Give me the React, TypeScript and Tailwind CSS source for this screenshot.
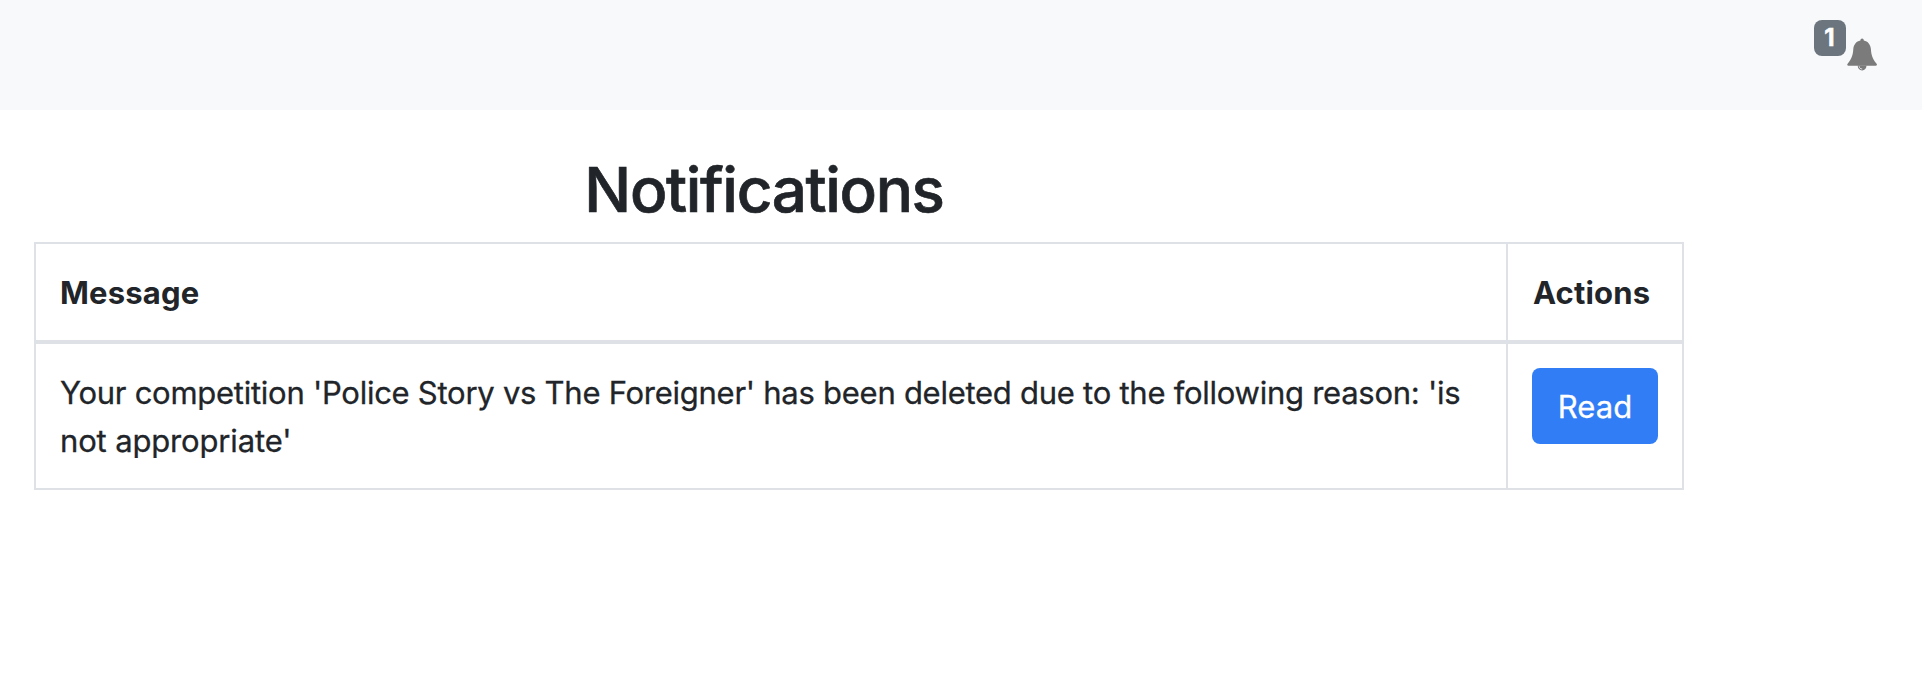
function BellIcon() {
  return (
    <svg viewBox="0 0 32 34" className="h-[34px] w-8" aria-hidden="true">
      <path
        d="M16.1 0.4C17.1 0.4 17.8 1.2 17.8 2.4C21.9 3.1 24.6 6.6 24.9 11C25.2 16.4 26.4 20.8 30.4 25.4C31.4 26.6 31 27.7 29.6 27.7H2.6C1.2 27.7 .8 26.6 1.8 25.4C5.8 20.8 7 16.4 7.3 11C7.6 6.6 10.3 3.1 14.4 2.4C14.4 1.2 15.1 .4 16.1 .4Z"
        fill="#7b7b7b"
      />
      <path d="M11.7 27.6H20.5C20.5 30.3 18.7 32.4 16.1 32.4C13.5 32.4 11.7 30.3 11.7 27.6Z" fill="#7b7b7b" />
      <path d="M13.2 28.3C13.3 30 14.6 31 16.2 31" fill="none" stroke="#e4e5e7" strokeWidth="1" />
    </svg>
  );
}

export default function App() {
  return (
    <div className="min-h-[678px] bg-white font-['Inter',sans-serif] text-[31px] leading-[48px] text-[#212529]">
      <header className="flex h-[110px] items-start justify-end bg-[#f8f9fb] pt-5 pr-11">
        <span className="flex h-9 w-8 items-center justify-center rounded-lg bg-[#6c757d] pr-px text-[24px] leading-[34px] font-bold text-white [-webkit-text-stroke:0.5px]">
          1
        </span>
        <span className="mt-[18px]">
          <BellIcon />
        </span>
      </header>

      <main>
        <h1 className="w-[1528px] pt-[41px] pb-[14px] text-center text-[62px] leading-[77px] font-medium tracking-[-1.35px] [-webkit-text-stroke:0.7px]">
          Notifications
        </h1>
        <div className="ml-[34px] grid w-[1650px] grid-cols-[1472px_176px] border-t-2 border-l-2 border-[#dee2e6]">
          <div className="h-[100px] border-r-2 border-b-4 border-[#dee2e6] px-6 pt-[25px] font-bold tracking-[0.2px]">
            Message
          </div>
          <div className="h-[100px] border-r-2 border-b-4 border-[#dee2e6] pt-[25px] pr-6 pl-[25px] font-bold tracking-[0.15px]">
            Actions
          </div>
          <div className="h-[146px] border-r-2 border-b-2 border-[#dee2e6] px-6 pt-[25px] whitespace-nowrap [-webkit-text-stroke:0.3px]">
            <p className="tracking-[-0.263px]">
              Your competition 'Police Story vs The Foreigner' has been deleted due to the following reason: 'is
            </p>
            <p className="tracking-[-0.15px]">not appropriate'</p>
          </div>
          <div className="h-[146px] border-r-2 border-b-2 border-[#dee2e6] px-6 py-6">
            <button className="block h-[76px] w-[126px] rounded-lg bg-[#307df6] pt-px text-center text-white [-webkit-text-stroke:0.3px]">
              Read
            </button>
          </div>
        </div>
      </main>
    </div>
  );
}
